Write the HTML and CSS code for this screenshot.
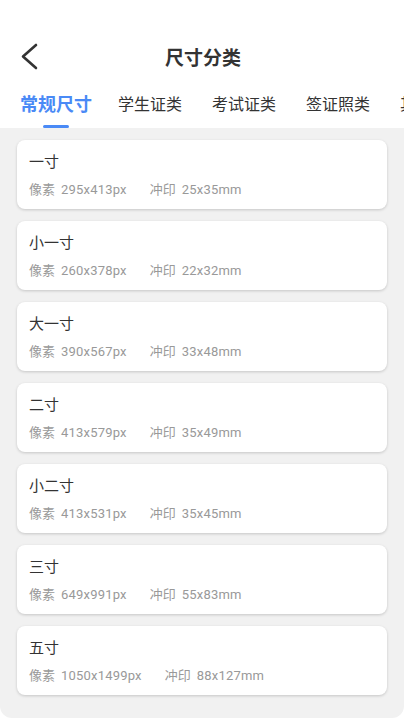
FILE: index.html
```html
<!doctype html>
<html>
  <head>
    <meta charset="utf-8">
    <title>尺寸分类</title>
    <link rel="stylesheet" href="styles.css">
  </head>
  <body>
    <div id="app">
      <header class="navbar">
        <a class="back">
          <svg width="20" height="30" viewBox="0 0 20 30">
            <polyline points="15,2 2,13.5 15,25" fill="none" stroke="#333" stroke-width="2.6" stroke-linecap="round" stroke-linejoin="round"/>
          </svg>
        </a>
        <h1 class="title">尺寸分类</h1>
      </header>
      <nav class="tabs">
        <div class="tab active">常规尺寸</div>
        <div class="tab">学生证类</div>
        <div class="tab">考试证类</div>
        <div class="tab">签证照类</div>
        <div class="tab">其他证件</div>
      </nav>
      <main class="list">
        <div class="card">
          <div class="name">一寸</div>
          <div class="info">
            <span class="group"><span>像素</span><span class="value">295x413px</span></span>
            <span class="group"><span>冲印</span><span class="value">25x35mm</span></span>
          </div>
        </div>
        <div class="card">
          <div class="name">小一寸</div>
          <div class="info">
            <span class="group"><span>像素</span><span class="value">260x378px</span></span>
            <span class="group"><span>冲印</span><span class="value">22x32mm</span></span>
          </div>
        </div>
        <div class="card">
          <div class="name">大一寸</div>
          <div class="info">
            <span class="group"><span>像素</span><span class="value">390x567px</span></span>
            <span class="group"><span>冲印</span><span class="value">33x48mm</span></span>
          </div>
        </div>
        <div class="card">
          <div class="name">二寸</div>
          <div class="info">
            <span class="group"><span>像素</span><span class="value">413x579px</span></span>
            <span class="group"><span>冲印</span><span class="value">35x49mm</span></span>
          </div>
        </div>
        <div class="card">
          <div class="name">小二寸</div>
          <div class="info">
            <span class="group"><span>像素</span><span class="value">413x531px</span></span>
            <span class="group"><span>冲印</span><span class="value">35x45mm</span></span>
          </div>
        </div>
        <div class="card">
          <div class="name">三寸</div>
          <div class="info">
            <span class="group"><span>像素</span><span class="value">649x991px</span></span>
            <span class="group"><span>冲印</span><span class="value">55x83mm</span></span>
          </div>
        </div>
        <div class="card">
          <div class="name">五寸</div>
          <div class="info">
            <span class="group"><span>像素</span><span class="value">1050x1499px</span></span>
            <span class="group"><span>冲印</span><span class="value">88x127mm</span></span>
          </div>
        </div>
      </main>
    </div>
  </body>
</html>
```

FILE: styles.css
```css
*,*:before,*:after {
  margin: 0;
  padding: 0;
  border: 0;
  box-sizing: border-box;
}

body {
  background-color: #fff;
  font-family: Roboto, "Noto Sans CJK SC", sans-serif;
  color: #333;
}

#app {
  width: 404px;
  height: 718px;
  display: flex;
  flex-direction: column;
  overflow: hidden;
}

.navbar {
  position: relative;
  height: 82px;
  padding-top: 35px;
  display: flex;
  align-items: center;
  justify-content: center;
}

.back {
  position: absolute;
  left: 21px;
  top: 43px;
  width: 20px;
  height: 30px;
}

.back svg {
  display: block;
}

.title {
  font-size: 19px;
  font-weight: bold;
  color: #333;
  line-height: 26px;
  padding-left: 2px;
}

.tabs {
  height: 46px;
  display: flex;
  padding-left: 9px;
  white-space: nowrap;
}

.tab {
  position: relative;
  flex: 0 0 94px;
  text-align: center;
  font-size: 16px;
  line-height: 45px;
  color: #333;
}

.tab.active {
  font-size: 18px;
  font-weight: bold;
  color: #4a8af6;
}

.tab.active:after {
  content: "";
  position: absolute;
  left: 34px;
  bottom: 0;
  width: 26px;
  height: 3px;
  border-radius: 2px;
  background-color: #4a8af6;
}

.list {
  flex: 1;
  background-color: #f1f1f1;
  padding: 12px 17px;
  display: flex;
  flex-direction: column;
  gap: 12px;
  border-radius: 0 0 12px 12px;
}

.card {
  background-color: #fff;
  border-radius: 8px;
  padding: 12px 12px 10px;
  box-shadow: 0 1px 3px rgba(0,0,0,0.18);
}

.name {
  font-size: 15px;
  line-height: 20px;
  color: #333;
}

.info {
  margin-top: 9px;
  font-size: 13px;
  line-height: 18px;
  color: #999;
  display: flex;
  gap: 23px;
}

.value {
  margin-left: 6px;
  letter-spacing: 0.2px;
}
```
